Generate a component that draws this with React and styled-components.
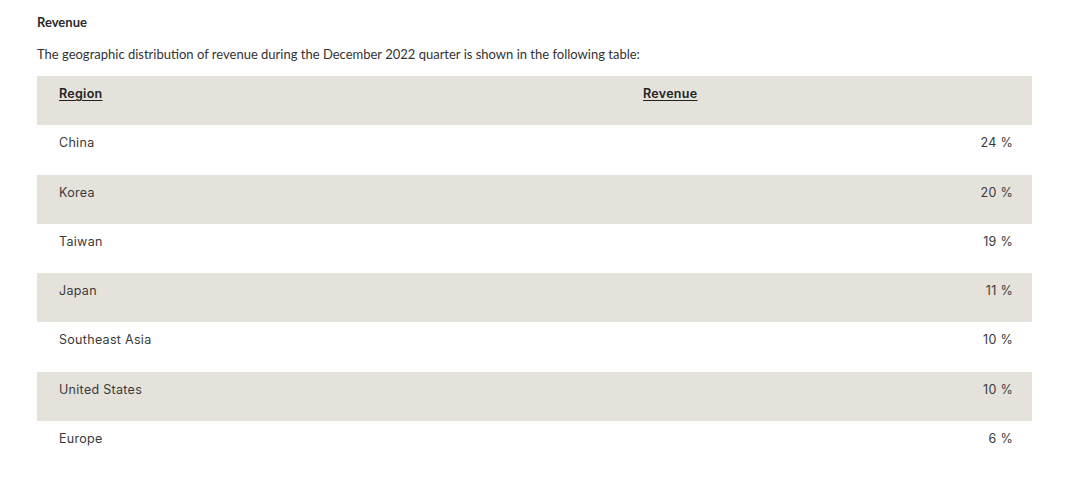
import React from 'react'
import styled, { createGlobalStyle } from 'styled-components';

const rows = [
  ['China', '24 %'],
  ['Korea', '20 %'],
  ['Taiwan', '19 %'],
  ['Japan', '11 %'],
  ['Southeast Asia', '10 %'],
  ['United States', '10 %'],
  ['Europe', '6 %'],
];

const App = () => {
  return (
    <Page>
      <GlobalStyle />
      <Title>Revenue</Title>
      <Intro>The geographic distribution of revenue during the December 2022 quarter is shown in the following table:</Intro>
      <Table>
        <Row $shade>
          <HeadCell>Region</HeadCell>
          <HeadCell>Revenue</HeadCell>
        </Row>
        {rows.map(([region, value], i) => (
          <Row key={region} $shade={i % 2 === 1}>
            <Cell>{region}</Cell>
            <Cell $right>{value}</Cell>
          </Row>
        ))}
      </Table>
    </Page>
  )
}

export default App

const GlobalStyle = createGlobalStyle`
  body { margin: 0; background: #fff; }
`;

const Page = styled.div`
  width: 1080px;
  height: 482px;
  box-sizing: border-box;
  padding: 13px 48px 0 37px;
  color: #333;
`;

const Title = styled.h2`
  margin: 0;
  font-family: Lato, sans-serif;
  font-weight: 700;
  font-size: 13px;
  line-height: 18px;
  color: #2b2b2b;
`;

const Intro = styled.p`
  margin: 14px 0 0;
  font-family: Lato, sans-serif;
  font-size: 13px;
  line-height: 18px;
  color: #333;
`;

const Table = styled.div`
  margin-top: 13px;
  width: 995px;
  display: flex;
  flex-direction: column;
`;

const Row = styled.div`
  display: grid;
  grid-template-columns: 584px 411px;
  height: 49.3px;
  background: ${({ $shade }) => ($shade ? '#e5e2dc' : '#fff')};
`;

const Cell = styled.div`
  padding: 10px ${({ $right }) => ($right ? '19px' : '22px')} 0 22px;
  text-align: ${({ $right }) => ($right ? 'right' : 'left')};
  font-family: Inter, sans-serif;
  font-size: 12.5px;
  line-height: 16px;
  letter-spacing: 0.3px;
  color: #3a3a3a;
`;

const HeadCell = styled(Cell)`
  font-weight: 600;
  text-decoration: underline;
  text-underline-offset: 2px;
  color: #222;
`;
